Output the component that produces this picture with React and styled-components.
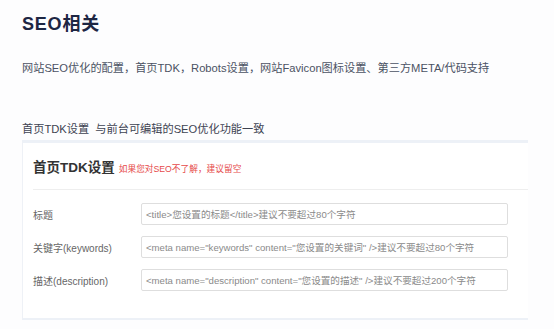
import React from "react";
import styled, { createGlobalStyle } from "styled-components";

const Global = createGlobalStyle`
  html, body { margin: 0; padding: 0; background: #fdfdfe; }
  body { font-family: "Liberation Sans", "Noto Sans CJK SC", sans-serif; }
`;

const Page = styled.div`
  width: 554px;
  height: 329px;
  box-sizing: border-box;
  padding: 12px 0 0 22px;
  display: flex;
  flex-direction: column;
  overflow: hidden;
`;

const Title = styled.h1`
  margin: 0;
  font-size: 18px;
  line-height: 24px;
  font-weight: 700;
  letter-spacing: 0.8px;
  color: #1d2643;
`;

const Intro = styled.p`
  margin: 24px 0 0;
  font-size: 11.2px;
  line-height: 16px;
  color: #4b5263;
`;

const SectionLabel = styled.div`
  margin-top: 45px;
  font-size: 11.2px;
  line-height: 16px;
  color: #3d4352;
`;

const Card = styled.section`
  margin-top: 3px;
  width: 506px;
  box-sizing: border-box;
  background: #fff;
  border-top: 3px solid #edf1f7;
  border-bottom: 2px solid #edf1f7;
  border-left: 1px solid #eef1f6;
  padding-left: 10px;
`;

const CardHead = styled.div`
  display: flex;
  align-items: baseline;
  gap: 4px;
  height: 47px;
  padding-top: 13px;
  box-sizing: border-box;
  border-bottom: 1px solid #eeeeee;
`;

const CardTitle = styled.span`
  font-size: 13.5px;
  font-weight: 700;
  color: #333;
`;

const Hint = styled.span`
  font-size: 8.7px;
  color: #e64a4a;
`;

const Form = styled.div`
  display: flex;
  flex-direction: column;
  gap: 11px;
  padding: 13px 20px 27px 0;
`;

const Row = styled.div`
  display: grid;
  grid-template-columns: 108px 1fr;
  align-items: center;
`;

const Label = styled.label`
  font-size: 10px;
  color: #666;
`;

const Field = styled.div`
  height: 22px;
  box-sizing: border-box;
  border: 1px solid #dedede;
  border-radius: 2px;
  background: #fff;
  padding: 0 4px;
  display: flex;
  align-items: center;
  font-size: 9.6px;
  color: #8a8a8a;
  white-space: nowrap;
  overflow: hidden;
`;

const rows = [
  ["标题", "<title>您设置的标题</title>建议不要超过80个字符"],
  ["关键字(keywords)", '<meta name="keywords" content="您设置的关键词" />建议不要超过80个字符'],
  ["描述(description)", '<meta name="description" content="您设置的描述" />建议不要超过200个字符'],
];

export default function App() {
  return (
    <>
      <Global />
      <Page>
        <Title>SEO相关</Title>
        <Intro>网站SEO优化的配置，首页TDK，Robots设置，网站Favicon图标设置、第三方META/代码支持</Intro>
        <SectionLabel>首页TDK设置&nbsp;&nbsp;与前台可编辑的SEO优化功能一致</SectionLabel>
        <Card>
          <CardHead>
            <CardTitle>首页TDK设置</CardTitle>
            <Hint>如果您对SEO不了解，建议留空</Hint>
          </CardHead>
          <Form>
            {rows.map(([l, p]) => (
              <Row key={l}>
                <Label>{l}</Label>
                <Field>{p}</Field>
              </Row>
            ))}
          </Form>
        </Card>
      </Page>
    </>
  );
}
